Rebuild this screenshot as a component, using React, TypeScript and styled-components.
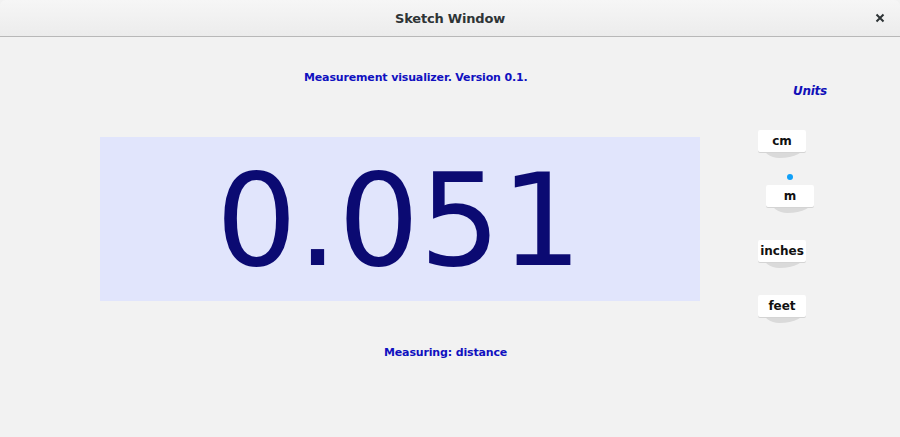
import React from 'react';
import styled, {createGlobalStyle} from 'styled-components';

const GlobalStyle = createGlobalStyle`
	html, body {
		margin: 0;
		padding: 0;
		background: #f2f2f2;
		font-family: "DejaVu Sans", "Liberation Sans", sans-serif;
	}
`;

const units = ['cm', 'm', 'inches', 'feet'];
const selectedUnit = 'm';

const Window = styled.div`
	width: 900px;
	height: 437px;
	display: flex;
	flex-direction: column;
	background: #f2f2f2;
	overflow: hidden;
`;

const TitleBar = styled.div`
	flex: none;
	height: 36px;
	display: flex;
	align-items: center;
	justify-content: center;
	position: relative;
	background: linear-gradient(to bottom, #f6f6f6, #ececec);
	border-bottom: 1px solid #b8b8b8;
	border-radius: 6px 6px 0 0;
`;

const Title = styled.div`
	color: #2e3436;
	font-weight: bold;
	font-size: 13px;
	letter-spacing: -0.2px;
`;

const Close = styled.div`
	position: absolute;
	right: 12px;
	top: 10px;
	width: 16px;
	height: 16px;
	display: flex;
	align-items: center;
	justify-content: center;
`;

const Body = styled.div`
	flex: 1;
	display: flex;
`;

const Main = styled.div`
	width: 740px;
	display: flex;
	flex-direction: column;
`;

const Caption = styled.div<{indent: number; top?: number}>`
	padding-left: ${props => props.indent}px;
	margin-top: ${props => props.top ?? 0}px;
	color: #1010c0;
	font-size: 11px;
	font-weight: bold;
	letter-spacing: -0.15px;
`;

const Panel = styled.div`
	margin: 53px 0 45px 100px;
	width: 600px;
	height: 164px;
	background: #e1e5fc;
	display: flex;
	align-items: center;
	justify-content: center;
`;

const Reading = styled.div`
	color: #0b0a72;
	font-size: 128px;
	line-height: 1;
	margin-top: 4px;
	margin-left: -2px;
`;

const Side = styled.div`
	display: flex;
	flex-direction: column;
	padding-top: 47px;
`;

const SideTitle = styled.div`
	margin-left: 53px;
	color: #1010b8;
	font-size: 12px;
	font-weight: bold;
	font-style: italic;
	letter-spacing: -0.3px;
	margin-bottom: 32px;
`;

const UnitList = styled.div`
	display: flex;
	flex-direction: column;
	gap: 33px;
	margin-left: 18px;
`;

const ButtonWrap = styled.div`
	position: relative;
	z-index: 0;
`;

const UnitButton = styled.div<{selected?: boolean}>`
	position: relative;
	width: 48px;
	height: 22px;
	margin-left: ${props => props.selected ? 8 : 0}px;
	background: #ffffff;
	border-radius: 2px;
	display: flex;
	align-items: center;
	justify-content: center;
	font-size: 12px;
	font-weight: bold;
	color: #111;
	box-shadow: 0 1px 0 #d4d4d4;

	&::after {
		content: '';
		position: absolute;
		left: 4px;
		right: 0;
		top: 14px;
		height: 14px;
		background: #dadada;
		border-radius: 0 0 60% 40% / 0 0 100% 100%;
		z-index: -1;
	}

	&::before {
		content: '';
		display: ${props => props.selected ? 'block' : 'none'};
		position: absolute;
		top: -11px;
		left: 21px;
		width: 6px;
		height: 6px;
		border-radius: 50%;
		background: #10a0f8;
	}
`;

export default function App() {
	return (
		<Window>
			<GlobalStyle/>
			<TitleBar>
				<Title>Sketch Window</Title>
				<Close>
					<svg width="10" height="10" viewBox="0 0 10 10">
						<path d="M1.5 1.5 L8.5 8.5 M8.5 1.5 L1.5 8.5" stroke="#2e3436" strokeWidth="2"/>
					</svg>
				</Close>
			</TitleBar>
			<Body>
				<Main>
					<Caption indent={304} top={34}>Measurement visualizer. Version 0.1.</Caption>
					<Panel>
						<Reading>0.051</Reading>
					</Panel>
					<Caption indent={384}>Measuring: distance</Caption>
				</Main>
				<Side>
					<SideTitle>Units</SideTitle>
					<UnitList>
						{units.map(u => (
							<ButtonWrap key={u}>
								<UnitButton selected={u === selectedUnit}>{u}</UnitButton>
							</ButtonWrap>
						))}
					</UnitList>
				</Side>
			</Body>
		</Window>
	);
}
